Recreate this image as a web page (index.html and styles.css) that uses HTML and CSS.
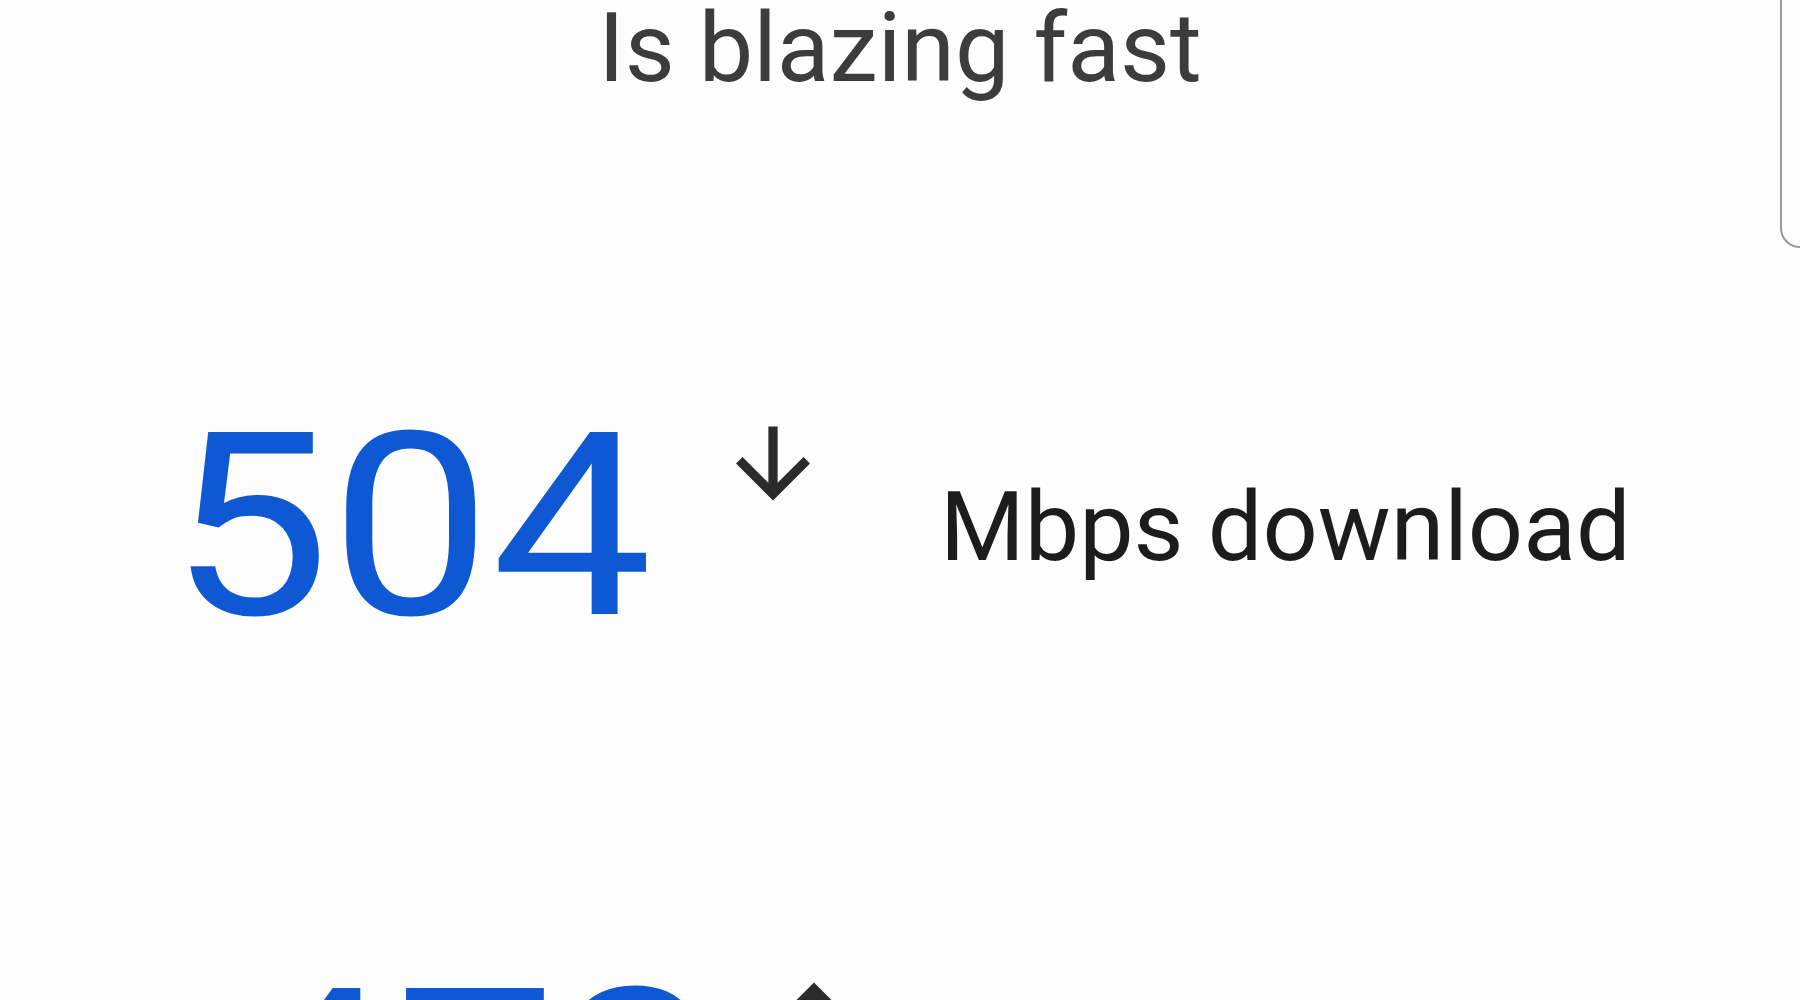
FILE: index.html
```html
<!DOCTYPE html>
<html lang="en">
<head>
<meta charset="utf-8">
<title>Is blazing fast</title>
<link rel="stylesheet" href="styles.css">
</head>
<body>
<main class="page">
  <h1 class="title">Is blazing fast</h1>
  <div class="stats">
    <div class="row">
      <span class="num">504</span>
      <svg class="arrow" viewBox="4 4 16 16" aria-hidden="true"><path d="M20 12l-1.41-1.41L13 16.17V4h-2v12.17l-5.58-5.59L4 12l8 8 8-8z"/></svg>
      <span class="unit">Mbps download</span>
    </div>
    <div class="row row-up">
      <span class="num">473</span>
      <svg class="arrow" viewBox="4 4 16 16" aria-hidden="true"><path d="M4 12l1.41 1.41L11 7.83V20h2V7.83l5.58 5.59L20 12l-8-8-8 8z"/></svg>
      <span class="unit">Mbps upload</span>
    </div>
  </div>
  <div class="edge-card"></div>
</main>
</body>
</html>
```

FILE: styles.css
```css
html, body {
  margin: 0;
  padding: 0;
  background: #fdfdfd;
  overflow: hidden;
}

.page {
  position: relative;
  width: 1800px;
  height: 1000px;
  font-family: Roboto, "Noto Sans", "Liberation Sans", sans-serif;
}

.title {
  margin: 0;
  font-size: 97px;
  line-height: 1;
  font-weight: 400;
  color: #3c3c3c;
  text-align: center;
}

.stats {
  display: flex;
  flex-direction: column;
  gap: 300px;
  margin-top: 302px;
}

.row {
  display: flex;
  justify-content: center;
  align-items: center;
}

.num {
  display: inline-block;
  font-size: 256px;
  line-height: 1;
  font-weight: 400;
  color: #0e59d3;
  transform: scaleX(1.12);
  transform-origin: left center;
  margin-right: 135px;
}

.arrow {
  width: 74px;
  height: 75px;
  fill: #2b2b2b;
  align-self: flex-start;
  margin-top: 27px;
  margin-right: 130px;
}

.row-up .num {
  margin-right: 112px;
}

.row-up .arrow {
  margin-right: 153px;
}

.unit {
  font-size: 97px;
  line-height: 1;
  color: #1c1c1c;
}

.edge-card {
  position: absolute;
  top: -4px;
  right: -30px;
  width: 48px;
  height: 250px;
  border-left: 2px solid #999;
  border-bottom: 2px solid #999;
  border-bottom-left-radius: 20px;
}
```
